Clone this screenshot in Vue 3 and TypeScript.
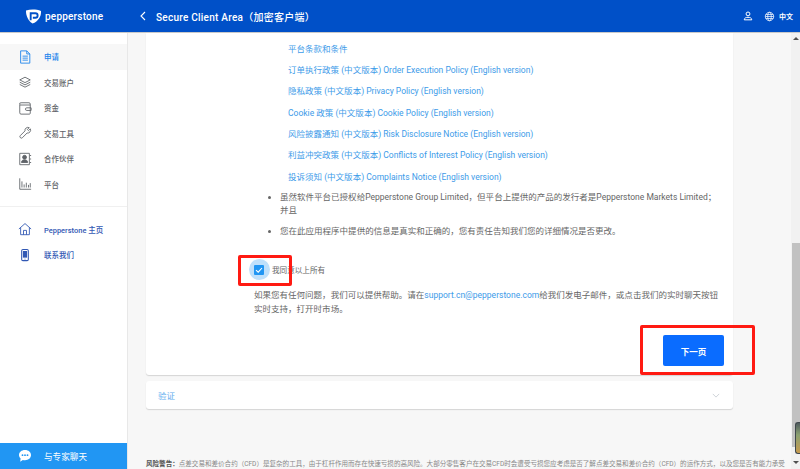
<script setup lang="ts">
const topNav = [
  { id: 'doc', label: '申请', active: true },
  { id: 'layers', label: '交易账户' },
  { id: 'wallet', label: '资金' },
  { id: 'tool', label: '交易工具' },
  { id: 'partner', label: '合作伙伴' },
  { id: 'chart', label: '平台' }
]
const links = [
  '平台条款和条件',
  '订单执行政策 (中文版本) Order Execution Policy (English version)',
  '隐私政策 (中文版本) Privacy Policy (English version)',
  'Cookie 政策 (中文版本) Cookie Policy (English version)',
  '风险披露通知 (中文版本) Risk Disclosure Notice (English version)',
  '利益冲突政策 (中文版本) Conflicts of Interest Policy (English version)',
  '投诉须知 (中文版本) Complaints Notice (English version)'
]
</script>

<template>
  <div class="app">
    <header class="topbar">
      <div class="brand">
        <svg class="logo" viewBox="0 0 18 16" width="17" height="15">
          <path d="M1 1.5 C6 .3 12 .3 17 2 C17.5 8 14 13 8 15.5 C3.5 13 .8 7 1 1.5 Z" fill="#fff" />
          <path d="M6 12 V4.5 H11 A2.4 2.4 0 0 1 11 9.3 H8.3" fill="none" stroke="#0050c8" stroke-width="2" />
        </svg>
        <span class="brand-name">pepperstone</span>
      </div>
      <svg class="back" viewBox="0 0 8 10" width="8" height="10"><path d="M6 1 L2 5 L6 9" fill="none" stroke="#fff" stroke-width="1.1" /></svg>
      <span class="title">Secure Client Area（加密客户端）</span>
      <svg class="user" viewBox="0 0 12 12" width="10" height="10" fill="none" stroke="#fff" stroke-width="1.2">
        <circle cx="6" cy="3.5" r="2.3" />
        <path d="M1.5 10.6 C1.5 8.4 3.5 7.6 6 7.6 C8.5 7.6 10.5 8.4 10.5 10.6 Z" />
      </svg>
      <svg class="globe" viewBox="0 0 12 12" width="11" height="11" fill="none" stroke="#fff" stroke-width=".8">
        <circle cx="6" cy="6" r="4.6" />
        <ellipse cx="6" cy="6" rx="2" ry="4.6" />
        <path d="M1.4 6 H10.6 M2 3.8 H10 M2 8.2 H10" />
      </svg>
      <span class="lang">中文</span>
    </header>

    <div class="body">
      <aside class="sidebar">
        <nav class="nav-top">
          <a v-for="item in topNav" :key="item.id" class="nav-item" :class="{ active: item.active }">
            <svg class="nav-icon" viewBox="0 0 16 16" width="14" height="14" fill="none" stroke="currentColor" stroke-width="1">
              <template v-if="item.id === 'doc'">
                <path d="M3 1 H10 L13.5 4.5 V15 H3 Z M10 1 V4.5 H13.5" />
                <path d="M5.2 7 H11.3 M5.2 9.3 H11.3 M5.2 11.6 H11.3" />
              </template>
              <template v-else-if="item.id === 'layers'">
                <path d="M8 2.5 L14 5.6 L8 8.7 L2 5.6 Z" />
                <path d="M2 8.2 L8 11.3 L14 8.2 M2 10.8 L8 13.9 L14 10.8" />
              </template>
              <template v-else-if="item.id === 'wallet'">
                <path d="M2 4 A1.5 1.5 0 0 1 3.5 2 H12.5 A1.5 1.5 0 0 1 14 3.5 V14 A1 1 0 0 1 13 15 H3.5 A1.5 1.5 0 0 1 2 13.5 Z" />
                <path d="M2.2 4.6 H14 M10 7.8 H15 V10.8 H10 A1.5 1.5 0 0 1 10 7.8 Z" />
              </template>
              <template v-else-if="item.id === 'tool'">
                <path d="M2.6 11 L8 5.6 A3.4 3.4 0 0 1 12.8 1.9 L10.7 4 L12 5.3 L14.1 3.2 A3.4 3.4 0 0 1 10.4 8 L5 13.4 A1.7 1.7 0 0 1 2.6 11 Z" />
              </template>
              <template v-else-if="item.id === 'partner'">
                <path d="M2 1.5 H13 V14.5 H2 Z M13.5 4 H15 M13.5 8 H15 M13.5 12 H15" />
                <circle cx="7.5" cy="6" r="2.2" fill="currentColor" />
                <path d="M4 12 C4 9.6 5.5 9 7.5 9 C9.5 9 11 9.6 11 12 Z" fill="currentColor" />
              </template>
              <template v-else>
                <path d="M2 1.5 V14 H15" />
                <path d="M4.5 12 V5 M7 12 V8.5 M9.5 12 V6.5 M12 12 V9 M14 12 V7" />
              </template>
            </svg>
            <span>{{ item.label }}</span>
          </a>
        </nav>
        <nav class="nav-bottom">
          <a class="nav-item link">
            <svg class="nav-icon" viewBox="0 0 16 16" width="14" height="14" fill="none" stroke="currentColor" stroke-width="1">
              <path d="M1 8 L8 1.8 L15 8 M3 6.6 V14.5 H13 V6.6" />
              <path d="M6.3 14.5 V9.6 H9.7 V14.5" />
            </svg>
            <span>Pepperstone 主页</span>
          </a>
          <a class="nav-item link">
            <svg class="nav-icon" viewBox="0 0 16 16" width="14" height="14" fill="none" stroke="currentColor" stroke-width="1.2">
              <rect x="4.2" y="1.6" width="7.6" height="12.8" rx="1.4" />
              <rect x="5.6" y="3.4" width="4.8" height="7.6" fill="currentColor" stroke="none" />
              <circle cx="8" cy="12.6" r=".6" fill="currentColor" stroke="none" />
            </svg>
            <span>联系我们</span>
          </a>
        </nav>
        <div class="chat">
          <svg class="chat-icon" viewBox="0 0 14 14" width="14" height="14">
            <path d="M7 1 C10.6 1 13 3.2 13 6.1 C13 9 10.6 11.2 7 11.2 C6.2 11.2 5.5 11.1 4.8 10.9 L2.2 12.8 L2.6 9.6 C1.6 8.6 1 7.4 1 6.1 C1 3.2 3.4 1 7 1 Z" fill="#fff" />
            <circle cx="4.5" cy="6.2" r=".9" fill="#2196f3" />
            <circle cx="7" cy="6.2" r=".9" fill="#2196f3" />
            <circle cx="9.5" cy="6.2" r=".9" fill="#2196f3" />
          </svg>
          <span>与专家聊天</span>
        </div>
      </aside>

      <main class="main">
        <section class="card">
          <ul class="links">
            <li v-for="l in links" :key="l">{{ l }}</li>
          </ul>
          <ul class="bullets">
            <li>虽然软件平台已授权给Pepperstone Group Limited，但平台上提供的产品的发行者是Pepperstone Markets Limited；并且</li>
            <li>您在此应用程序中提供的信息是真实和正确的，您有责任告知我们您的详细情况是否更改。</li>
          </ul>
          <label class="agree">
            <span class="halo">
              <span class="box">
                <svg viewBox="0 0 10 10" width="10" height="10"><path d="M2 5.2 L4.2 7.2 L8 3" fill="none" stroke="#fff" stroke-width="1.1" /></svg>
              </span>
            </span>
            <span>我同意以上所有</span>
          </label>
          <p class="help">如果您有任何问题，我们可以提供帮助。请在<span class="mail">support.cn@pepperstone.com</span>给我们发电子邮件，或点击我们的实时聊天按钮实时支持，打开时市场。</p>
          <div class="actions">
            <button class="next" type="button">下一页</button>
          </div>
        </section>
        <section class="verify">
          <span>验证</span>
          <svg viewBox="0 0 10 6" width="8" height="5"><path d="M1 1 L5 5 L9 1" fill="none" stroke="#c4c9cf" stroke-width="1" /></svg>
        </section>
        <p class="risk"><b>风险警告：</b>点差交易和差价合约（CFD）是复杂的工具，由于杠杆作用而存在快速亏损的高风险。大部分零售客户在交易CFD时会遭受亏损您应考虑是否了解点差交易和差价合约（CFD）的运作方式，以及您是否有能力承受</p>
      </main>

      <div class="scrollbar">
        <span class="arrow up"></span>
        <div class="thumb-area"><div class="thumb"></div></div>
        <span class="arrow down"></span>
      </div>
      <div class="widget"></div>
    </div>

    <div class="mark mark-check"></div>
    <div class="mark mark-next"></div>
  </div>
</template>

<style>
html, body { margin: 0; height: 100%; overflow: hidden; }
</style>

<style scoped>
.app {
  position: relative;
  width: 800px;
  height: 469px;
  display: flex;
  flex-direction: column;
  overflow: hidden;
  font-family: Roboto, "Noto Sans CJK SC", sans-serif;
  background: #f7f7f7;
}
.topbar {
  flex: none;
  height: 33px;
  box-sizing: border-box;
  display: flex;
  align-items: center;
  background: #0050c8;
  color: #fff;
  border-bottom: 1px solid #c9c9c9;
  position: relative;
  z-index: 2;
}
.brand { display: flex; align-items: center; width: 139px; padding-left: 25px; box-sizing: border-box; }
.logo { flex: none; }
.brand-name { margin-left: 3px; font-size: 10px; font-weight: 500; letter-spacing: .2px; }
.back { flex: none; }
.title { margin-left: 9px; font-size: 10px; font-weight: 500; letter-spacing: .25px; flex: 1; }
.user { margin-right: 11px; }
.globe { margin-right: 4px; }
.lang { font-size: 7px; font-weight: 700; margin-right: 7px; }
.body { flex: 1; min-height: 0; display: flex; position: relative; }
.sidebar {
  flex: none;
  width: 128px;
  box-sizing: border-box;
  background: #fff;
  border-right: 1px solid #e8e8e8;
  display: flex;
  flex-direction: column;
  padding-top: 11px;
}
.nav-top { border-bottom: 1px solid #f0f0f0; padding-bottom: 9px; }
.nav-bottom { padding-top: 9.5px; flex: 1; }
.nav-item {
  height: 25.5px;
  display: flex;
  align-items: center;
  padding-left: 18px;
  font-size: 7.47px;
  font-weight: 500;
  color: #5f6368;
}
.nav-item.active { background: #f7f7f7; color: #1c84ec; }
.nav-item.link { color: #3158b4; }
.nav-icon { flex: none; margin-right: 12px; }
.chat {
  flex: none;
  height: 26px;
  background: #2196f3;
  color: #fff;
  display: flex;
  align-items: center;
  padding-left: 18px;
  font-size: 8.6px;
}
.chat-icon { margin-right: 12px; }
.main { flex: 1; min-width: 0; padding: 0 67px 0 18px; display: flex; flex-direction: column; }
.card {
  flex: none;
  height: 342px;
  box-sizing: border-box;
  background: #fff;
  border-radius: 0 0 3px 3px;
  box-shadow: 0 1px 1px #d4d4d4;
  padding: 5.6px 13px 0 108px;
  color: #666;
  font-size: 8.53px;
  display: flex;
  flex-direction: column;
}
.links { list-style: none; margin: 0; padding: 0 0 0 34px; color: #3d9be9; }
.links li { height: 21.33px; line-height: 21.33px; white-space: nowrap; }
.bullets { list-style: disc; margin: 3.4px 0 0; padding: 0 0 0 26px; line-height: 13px; }
.bullets li { margin-bottom: 8px; }
.agree { display: flex; align-items: center; margin: 13px 0 0 -5.5px; font-size: 7.6px; }
.halo {
  width: 21px;
  height: 21px;
  border-radius: 50%;
  background: #bfe0fb;
  display: flex;
  align-items: center;
  justify-content: center;
  margin-right: 2.5px;
}
.box {
  width: 10px;
  height: 10px;
  border-radius: 1px;
  background: #2196f3;
  display: flex;
}
.help { margin: 9px 0 0; line-height: 13.3px; }
.mail { color: #3d9be9; }
.actions { margin: auto -4px 0 0; display: flex; justify-content: flex-end; padding: 0 0 9px 0; }
.next {
  width: 61px;
  height: 31px;
  border: 0;
  border-radius: 2px;
  background: #0a6cff;
  color: #fff;
  font: 700 8.53px Roboto, "Noto Sans CJK SC", sans-serif;
}
.verify {
  flex: none;
  height: 28px;
  margin-top: 6px;
  background: #fff;
  border-radius: 3px;
  box-shadow: 0 1px 1px #d4d4d4;
  display: flex;
  align-items: center;
  justify-content: space-between;
  padding: 0 13px 0 12px;
  color: #5fadee;
  font-size: 8.53px;
}
.risk { margin: 49px -60px 0 0; font-size: 6.55px; color: #888; white-space: nowrap; }
.risk b { color: #555; }
.scrollbar {
  position: absolute;
  top: 0;
  right: 0;
  bottom: 0;
  width: 9px;
  background: #f1f1f1;
  display: flex;
  flex-direction: column;
  align-items: center;
}
.thumb-area { flex: 1; width: 100%; padding: 198px 0 0 1px; box-sizing: border-box; }
.thumb { height: 204px; background: #c1c1c1; }
.arrow { flex: none; width: 0; height: 0; margin: 4px 0 5px; border-left: 3px solid transparent; border-right: 3px solid transparent; }
.arrow.up { border-bottom: 3px solid #505050; }
.arrow.down { border-top: 3px solid #505050; }
.widget {
  position: absolute;
  right: 0;
  top: 389px;
  width: 5px;
  height: 32px;
  background: linear-gradient(#4e5a5e, #8aa070 40%, #c79a4e);
  border: 1px solid #3f474c;
  border-right: 0;
  border-radius: 3px 0 0 3px;
  box-sizing: border-box;
}
.mark { position: absolute; border: 3px solid #ff1a12; border-radius: 2px; box-sizing: border-box; z-index: 3; }
.mark-check { left: 238px; top: 255px; width: 54px; height: 31px; }
.mark-next { left: 640px; top: 325px; width: 115px; height: 50px; }
</style>
